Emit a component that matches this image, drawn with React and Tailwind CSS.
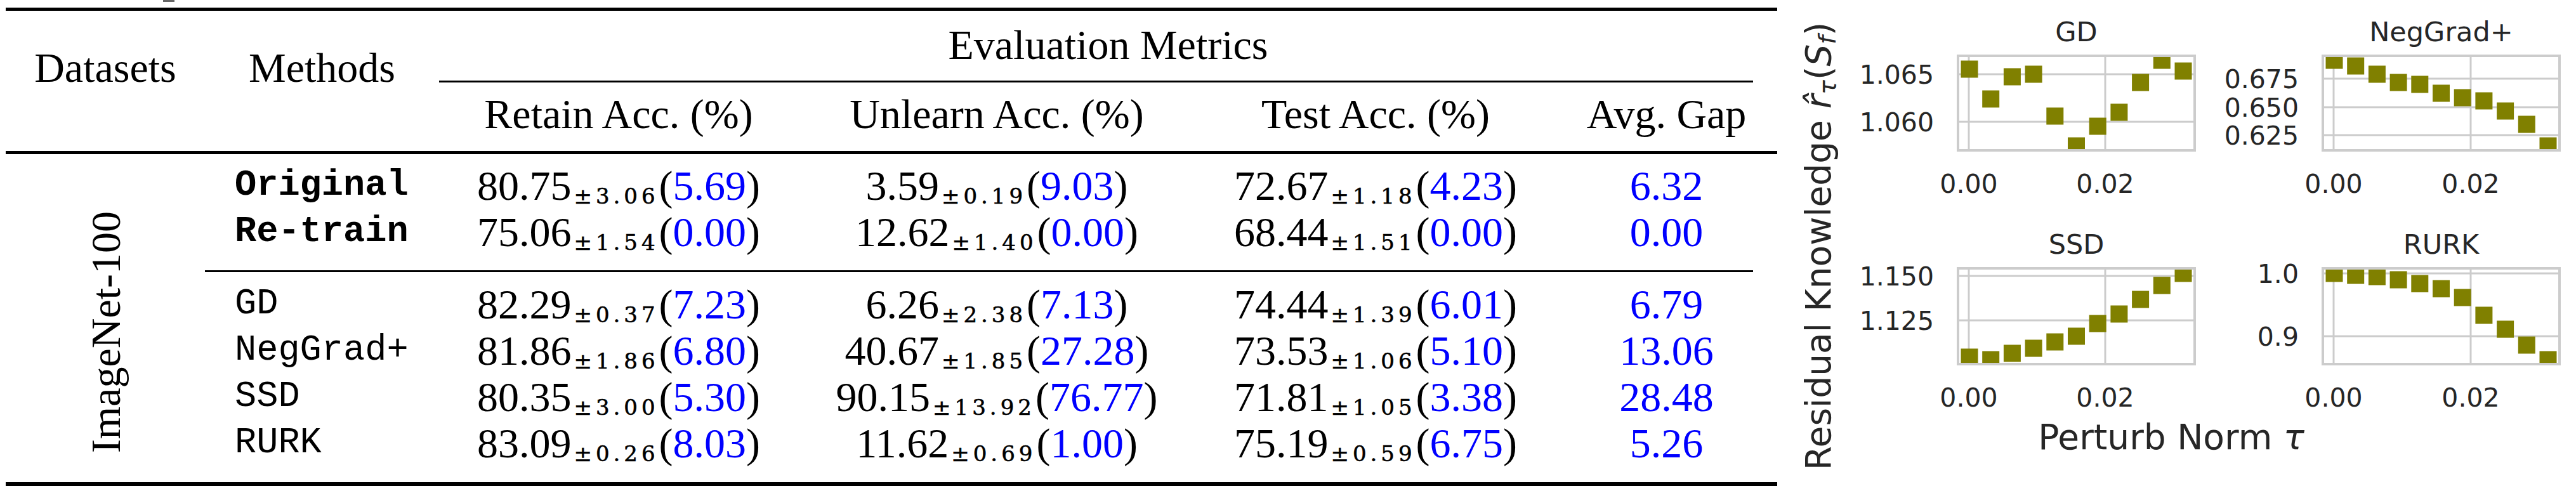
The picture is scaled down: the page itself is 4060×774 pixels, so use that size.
import React from 'react'

const HEAD_ROWS = [
  { m: 'Original', c: [['80.75', '3.06', '5.69'], ['3.59', '0.19', '9.03'], ['72.67', '1.18', '4.23']], g: '6.32' },
  { m: 'Re-train', c: [['75.06', '1.54', '0.00'], ['12.62', '1.40', '0.00'], ['68.44', '1.51', '0.00']], g: '0.00' },
]

const METHOD_ROWS = [
  { m: 'GD', c: [['82.29', '0.37', '7.23'], ['6.26', '2.38', '7.13'], ['74.44', '1.39', '6.01']], g: '6.79' },
  { m: 'NegGrad+', c: [['81.86', '1.86', '6.80'], ['40.67', '1.85', '27.28'], ['73.53', '1.06', '5.10']], g: '13.06' },
  { m: 'SSD', c: [['80.35', '3.00', '5.30'], ['90.15', '13.92', '76.77'], ['71.81', '1.05', '3.38']], g: '28.48' },
  { m: 'RURK', c: [['83.09', '0.26', '8.03'], ['11.62', '0.69', '1.00'], ['75.19', '0.59', '6.75']], g: '5.26' },
]

const COLS = ['w-[566px]', 'w-[626px]', 'w-[568px]']

// residual knowledge curves, marker centres already in figure pixels
const PLOTS = [
  { id: 'gd', title: 'GD', x0: 246, y0: 88, x1: 619, y1: 237, gx: [263, 478], mx: 264,
    gy: [[117, '1.065'], [192, '1.060']],
    ys: [109, 156, 121, 117, 183, 230, 199, 177, 130, 95, 112] },
  { id: 'ng', title: 'NegGrad+', x0: 821, y0: 88, x1: 1194, y1: 237, gx: [838, 1054], mx: 839,
    gy: [[124, '0.675'], [169, '0.650'], [213, '0.625']],
    ys: [95, 104, 117, 130, 133, 147, 154, 159, 175, 196, 230] },
  { id: 'ssd', title: 'SSD', x0: 246, y0: 423, x1: 619, y1: 574, gx: [263, 478], mx: 264,
    gy: [[435, '1.150'], [505, '1.125']],
    ys: [563, 567, 557, 549, 539, 530, 510, 495, 472, 450, 431] },
  { id: 'rurk', title: 'RURK', x0: 821, y0: 423, x1: 1194, y1: 574, gx: [838, 1054], mx: 839,
    gy: [[431, '1.0'], [530, '0.9']],
    ys: [431, 434, 436, 441, 447, 455, 469, 497, 519, 544, 567] },
]

function Val({ v, s, d }) {
  return (
    <span className="whitespace-nowrap">
      {v}
      <span className="ml-[4px] font-['DejaVu_Serif',serif] text-[34px] tracking-[6px] leading-none align-[-6px] [-webkit-text-stroke:0.6px_black]">
        ±{s}
      </span>
      (<span className="text-[#0000ff]">{d}</span>)
    </span>
  )
}

function Row({ r, bold }) {
  return (
    <div className="flex h-[73px]">
      <div
        className={`w-[369px] pl-[47px] font-['Liberation_Mono',monospace] text-[57px] ${bold ? 'font-bold' : ''}`}
      >
        {r.m}
      </div>
      {r.c.map((c, i) => (
        <div key={i} className={`${COLS[i]} text-center`}>
          <Val v={c[0]} s={c[1]} d={c[2]} />
        </div>
      ))}
      <div className="w-[349px] text-center text-[#0000ff]">{r.g}</div>
    </div>
  )
}

function ResultsTable() {
  return (
    <div className="w-[2801px] shrink-0 pl-[9px] font-['Liberation_Serif',serif] text-[66px] leading-[73px] text-black">
      <div className="ml-[248px] h-[3px] w-[18px] bg-[#666]" />
      {/* toprule */}
      <div className="mt-[9px] h-[5px] bg-black" />

      {/* header */}
      <div className="flex">
        <div className="w-[314px] pt-[53px] text-center">Datasets</div>
        <div className="w-[369px] pt-[53px] text-center">Methods</div>
        <div className="w-[2109px] pt-[17px] pb-[22px]">
          <div className="h-[73px] text-center">Evaluation Metrics</div>
          <div className="mt-[20px] mr-[38px] h-[3px] bg-black" />
          <div className="mt-[13px] flex h-[73px]">
            <div className="w-[566px] text-center">Retain Acc. (%)</div>
            <div className="w-[626px] text-center">Unlearn Acc. (%)</div>
            <div className="w-[568px] text-center">Test Acc. (%)</div>
            <div className="w-[349px] text-center">Avg. Gap</div>
          </div>
        </div>
      </div>

      {/* midrule */}
      <div className="h-[5px] bg-black" />

      <div className="flex">
        <div className="flex w-[314px] items-center justify-center pt-[45px]">
          <span className="rotate-180 [writing-mode:vertical-rl]">ImageNet-100</span>
        </div>
        <div className="w-[2478px] pt-[13px] pb-[25px]">
          {HEAD_ROWS.map(r => <Row key={r.m} r={r} bold />)}
          <div className="mt-[24px] mb-[14px] mr-[38px] h-[3px] bg-black" />
          {METHOD_ROWS.map(r => <Row key={r.m} r={r} />)}
        </div>
      </div>

      {/* bottomrule */}
      <div className="h-[6px] bg-black" />
    </div>
  )
}

function Subplot({ p }) {
  return (
    <g>
      <defs>
        <clipPath id={`clip-${p.id}`}>
          <rect x={p.x0} y={p.y0} width={p.x1 - p.x0} height={p.y1 - p.y0} />
        </clipPath>
      </defs>
      {p.gx.map(x => (
        <line key={x} x1={x} x2={x} y1={p.y0} y2={p.y1} stroke="#cccccc" strokeWidth="3" />
      ))}
      {p.gy.map(([y]) => (
        <line key={y} x1={p.x0} x2={p.x1} y1={y} y2={y} stroke="#cccccc" strokeWidth="3" />
      ))}
      <g clipPath={`url(#clip-${p.id})`}>
        {p.ys.map((y, i) => (
          <rect key={i} x={p.mx + i * 33.7 - 13.5} y={y - 13.5} width="27" height="27" fill="#808000" />
        ))}
      </g>
      <rect
        x={p.x0} y={p.y0} width={p.x1 - p.x0} height={p.y1 - p.y0}
        fill="none" stroke="#cccccc" strokeWidth="4"
      />
      <text x={(p.x0 + p.x1) / 2} y={p.y0 - 23} textAnchor="middle" fontSize="43">{p.title}</text>
      {p.gy.map(([y, t]) => (
        <text key={t} x={p.x0 - 38} y={y + 15} textAnchor="end" fontSize="41">{t}</text>
      ))}
      {p.gx.map((x, i) => (
        <text key={x} x={x} y={p.y1 + 67} textAnchor="middle" fontSize="41">{i ? '0.02' : '0.00'}</text>
      ))}
    </g>
  )
}

function KnowledgeFigure() {
  return (
    <div className="ml-[39px] shrink-0">
      <svg width="1220" height="774" className="block font-['DejaVu_Sans',sans-serif]" fill="#262626">
        {PLOTS.map(p => <Subplot key={p.id} p={p} />)}
        <text transform="translate(45 388) rotate(-90)" textAnchor="middle" fontSize="55">
          Residual Knowledge <tspan fontStyle="italic">r̂</tspan>
          <tspan fontStyle="italic" fontSize="38" dy="8">τ</tspan>
          <tspan dy="-8">(</tspan>
          <tspan fontStyle="italic">S</tspan>
          <tspan fontStyle="italic" fontSize="38" dy="8">f</tspan>
          <tspan dy="-8">)</tspan>
        </text>
        <text x="582" y="708" textAnchor="middle" fontSize="55">
          Perturb Norm <tspan fontStyle="italic">τ</tspan>
        </text>
      </svg>
    </div>
  )
}

export default function App() {
  return (
    <div className="flex h-[774px] w-[4060px] overflow-hidden bg-white">
      <ResultsTable />
      <KnowledgeFigure />
    </div>
  )
}
